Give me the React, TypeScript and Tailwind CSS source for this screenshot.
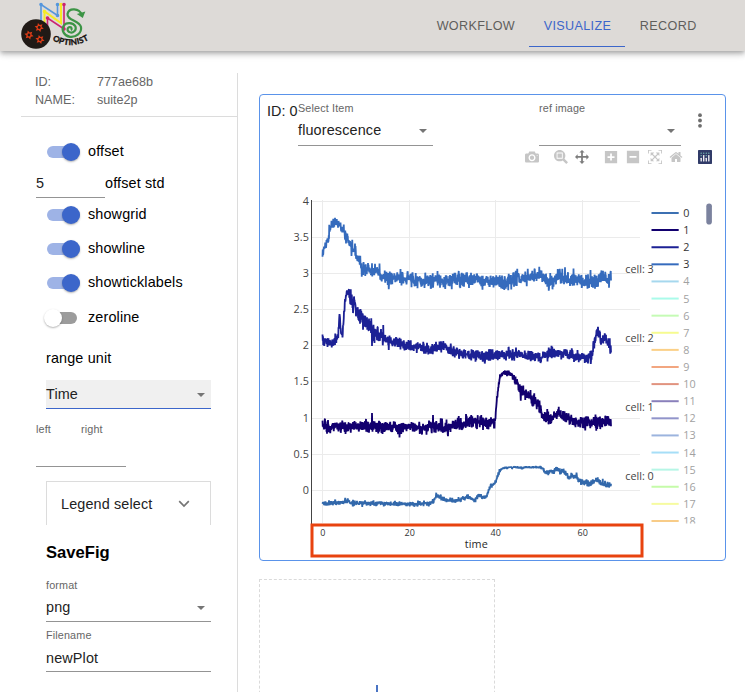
import React from "react";

type Pt = [number, number];

const seeded = (seed: number) => () => {
  seed = (seed * 1664525 + 1013904223) % 4294967296;
  return seed / 4294967296;
};

// Interpolates the key points and adds noise, four samples per pixel.
function trace(points: Pt[], noise: (x: number) => number, seed: number, spikes: Pt[] = []) {
  const rnd = seeded(seed);
  const out: string[] = [];
  let k = 0;
  let drift = 0;
  for (let x = 322.5; x <= 611; x += 0.25) {
    while (k < points.length - 2 && x > points[k + 1][0]) k++;
    const [x0, y0] = points[k];
    const [x1, y1] = points[k + 1];
    const t = Math.max(0, Math.min(1, (x - x0) / (x1 - x0)));
    const n = (rnd() + rnd() + rnd() + rnd() - 2) * 1.95;
    drift = drift * 0.9 + (rnd() - 0.5) * 0.5;
    let y = y0 + (y1 - y0) * t + (n + drift * 0.6) * noise(x);
    for (const [sx, sy] of spikes) if (Math.abs(sx - x) < 0.13) y = sy;
    out.push(`${x.toFixed(2)} ${y.toFixed(2)}`);
  }
  return "M" + out.join("L");
}

const TRACES = [
  {
    color: "#3268ab",
    d: trace(
      [[322, 504], [328, 504], [335, 502], [341, 502.5], [348, 501], [353, 503.5], [372, 503], [400, 504], [430, 503.5], [433, 502], [436, 496.5], [440, 497], [445, 500.5], [455, 501], [462, 499], [468, 496], [471, 498], [475, 501], [478, 495.5], [481, 497], [486, 497.5], [490, 487], [496, 481], [499, 472], [502, 468.5], [510, 467.5], [540, 467.2], [545, 472], [553, 472], [557, 468], [560, 472], [565, 471], [568, 477], [575, 476], [584, 483], [592, 483], [598, 480], [604, 484], [611, 485]],
      (x) => (x > 500 && x < 541 ? 0.55 : x > 560 ? 1.5 : 1.15), 17),
  },
  {
    color: "#12006f",
    d: trace(
      [[322, 427], [330, 426.5], [400, 427], [450, 427], [460, 423.5], [470, 421.5], [495, 422], [497, 397], [500, 377], [504, 371.5], [510, 374], [516, 379], [521, 391], [530, 396], [538, 405], [543, 417], [555, 418], [558, 413], [565, 419], [585, 422], [611, 421]],
      (x) => (x > 495 && x < 514 ? 1.2 : x > 514 && x < 540 ? 3.1 : 2.9), 43,
      [[372, 413], [433, 415], [563, 411]]),
  },
  {
    color: "#1c2195",
    d: trace(
      [[322, 340], [330, 345], [335, 342], [338, 337], [339.5, 315], [341, 331], [342.5, 335], [344, 312], [345.5, 298], [347, 292], [352, 301], [360, 316], [368, 325], [375, 334], [385, 338], [400, 344], [415, 347], [430, 350], [442, 345], [455, 352], [475, 356], [505, 355], [520, 354.5], [540, 357], [557, 352], [575, 356], [590, 358], [592, 355], [594, 342], [598, 328], [601, 343], [605, 338], [611, 347]],
      (x) => (x > 336 && x < 348 ? 2 : x > 348 && x < 390 ? 3.9 : 2.7), 91,
      [[372, 346]]),
  },
  {
    color: "#356bbd",
    d: trace(
      [[322, 255], [327, 241], [331, 227], [335, 221], [339, 225], [345, 234], [351, 246], [358, 260], [363, 268], [370, 272], [377, 272], [386, 279], [400, 277.5], [420, 281], [450, 280.5], [475, 277.5], [485, 281], [505, 281.5], [520, 278.5], [536, 274], [550, 281], [560, 276], [575, 279], [588, 283], [600, 278], [611, 278]],
      (x) => (x < 350 ? 2.6 : 3.4), 7),
  },
];

const Y_TICKS: [string, number][] = [["4", 201.5], ["3.5", 237.5], ["3", 273.5], ["2.5", 309.5], ["2", 345.5], ["1.5", 381.5], ["1", 418.5], ["0.5", 454.5], ["0", 490.5]];
const X_TICKS: [string, number][] = [["0", 322.5], ["20", 409.5], ["40", 495.5], ["60", 582.5]];
const LEGEND = ["#3c70b2", "#12006f", "#1c2195", "#356bbd", "#a6d8ee", "#aafbea", "#c5fbb5", "#f6fb90", "#fbd087", "#f2a680", "#e1937f", "#8a80bb", "#9194ca", "#9cb4de", "#a6def7", "#b6f6e6", "#c5fba9", "#f6fba0", "#f8cc88"];

const Chart = () => (
  <svg className="block" width="465" height="395" viewBox="260 165 465 395" fontFamily="'Open Sans', 'Noto Sans', sans-serif">
    <g stroke="#ebebeb">
      {Y_TICKS.map(([l, y]) => <path key={l} d={`M312 ${y}H640`} />)}
      {X_TICKS.map(([l, x]) => <path key={l} d={`M${x} 200V523`} />)}
    </g>
    <path d="M311.5 200V524" stroke="#444" />
    {TRACES.map((t) => <path key={t.color} d={t.d} fill="none" stroke={t.color} strokeWidth="1.8" strokeLinejoin="bevel" />)}
    <g fontSize="10.8" fill="#444">
      {Y_TICKS.map(([l, y]) => <text key={l} x="309" y={y + 3.7} textAnchor="end">{l}</text>)}
      {[3, 2, 1, 0].map((c, i) => <text key={c} x="625.3" y={273 + i * 69} textLength="28.5">{`cell: ${c}`}</text>)}
    </g>
    <clipPath id="legend"><path d="M645 200H720V523.5H645z" /></clipPath>
    <g clipPath="url(#legend)" fontSize="10.8">
      {LEGEND.map((c, i) => (
        <g key={i}>
          <path d={`M651.5 ${213 + i * 17.11}H678.7`} stroke={c} strokeWidth="2" />
          <text x="683.2" y={217 + i * 17.11} fill={i < 4 ? "#333" : "#a1a1a1"}>{i}</text>
        </g>
      ))}
    </g>
    <rect x="706.3" y="203.5" width="5.6" height="21" rx="2.8" fill="#7b829e" />
    <g fontSize="9" fill="#333" textAnchor="middle">
      {X_TICKS.map(([l, x]) => <text key={l} x={x + 0.3} y="536">{l}</text>)}
      <text x="476.3" y="548" fontSize="10.8" fill="#2a2a2a">time</text>
    </g>
    <rect x="312" y="525" width="330" height="31" fill="none" stroke="#e8430f" strokeWidth="3" />
  </svg>
);

const PATHS = {
  camera: "m500 450c-83 0-150-67-150-150 0-83 67-150 150-150 83 0 150 67 150 150 0 83-67 150-150 150z m400 150h-120c-16 0-34 13-39 29l-31 93c-6 15-23 28-40 28h-340c-16 0-34-13-39-28l-31-94c-6-15-23-28-40-28h-120c-55 0-100-45-100-100v-450c0-55 45-100 100-100h800c55 0 100 45 100 100v450c0 55-45 100-100 100z m-400-550c-138 0-250 112-250 250 0 138 112 250 250 250 138 0 250-112 250-250 0-138-112-250-250-250z m365 380c-19 0-35 16-35 35 0 19 16 35 35 35 19 0 35-16 35-35 0-19-16-35-35-35z",
  zoom: "m1000-25l-250 251c40 63 63 138 63 218 0 224-182 406-407 406-224 0-406-182-406-406s183-406 407-406c80 0 155 22 218 62l250-250 125 125z m-812 250l0 438 437 0 0-438-437 0z m62 375l313 0 0-312-313 0 0 312z",
  pan: "m1000 350l-187 188 0-125-250 0 0 250 125 0-188 187-187-187 125 0 0-250-250 0 0 125-188-188 186-187 0 125 252 0 0-250-125 0 187-188 188 188-125 0 0 250 250 0 0-126 187 188z",
  plus: "m1 787l0-875 875 0 0 875-875 0z m687-500l-187 0 0-187-125 0 0 187-188 0 0 125 188 0 0 187 125 0 0-187 187 0 0-125z",
  minus: "m0 788l0-876 875 0 0 876-875 0z m688-500l-500 0 0 125 500 0 0-125z",
  auto: "m250 850l-187 0-63 0 0-62 0-188 63 0 0 188 187 0 0 62z m688 0l-188 0 0-62 188 0 0-188 62 0 0 188 0 62-62 0z m-875-938l0 188-63 0 0-188 0-62 63 0 187 0 0 62-187 0z m875 188l0-188-188 0 0-62 188 0 62 0 0 62 0 188-62 0z m-125 188l-1 0-93-94-156 156 156 156 92-93 2 0 0 250-250 0 0-2 93-92-156-156-156 156 94 92 0 2-250 0 0-250 0 0 93 93 157-156-157-156-93 94 0 0 0-250 250 0 0 0-94 93 156 157 156-157-93-93 0 0 250 0 0 250z",
  home: "m786 296v-267q0-15-11-26t-25-10h-214v214h-143v-214h-214q-15 0-25 10t-11 26v267q0 1 0 2t0 2l321 264 321-264q1-1 1-4z m124 39l-34-41q-5-5-12-6h-2q-7 0-12 3l-386 322-386-322q-7-4-13-4-7 2-12 7l-35 41q-4 5-3 13t6 12l401 334q18 15 42 15t43-15l136-114v109q0 8 5 13t13 5h107q8 0 13-5t5-13v-227l122-102q5-5 6-12t-4-13z",
};

const ModeIcon = ({ name, w = 1000, active = false }: { name: keyof typeof PATHS; w?: number; active?: boolean }) => (
  <svg width="14" height="14" viewBox={`0 0 ${w} 1000`} className={active ? "text-[#7c7c7c]" : "text-[#c6c6c6]"}>
    <path d={PATHS[name]} transform="matrix(1 0 0 -1 0 850)" fill="currentColor" />
  </svg>
);

const ModeBar = () => (
  <div className="flex h-[18px] items-center justify-end gap-[15px] pr-[13px]">
    <ModeIcon name="camera" />
    <div className="flex gap-[7px]"><ModeIcon name="zoom" /><ModeIcon name="pan" active /></div>
    <div className="flex gap-[8px]">
      <ModeIcon name="plus" w={875} /><ModeIcon name="minus" w={875} /><ModeIcon name="auto" /><span className="-ml-[1px]"><ModeIcon name="home" w={928.6} /></span>
    </div>
    <svg width="14" height="14" viewBox="0 0 132 132">
      <rect width="132" height="132" rx="6" fill="#313b68" />
      <g fill="#80cfbe"><circle cx="78" cy="54" r="6" /><circle cx="102" cy="30" r="6" /><circle cx="78" cy="30" r="6" /><circle cx="54" cy="30" r="6" /><circle cx="30" cy="30" r="6" /><circle cx="30" cy="54" r="6" /></g>
      <g fill="#fff"><rect x="24" y="72" width="12" height="36" rx="5" /><rect x="48" y="48" width="12" height="60" rx="5" /><rect x="72" y="72" width="12" height="36" rx="5" /><rect x="96" y="48" width="12" height="60" rx="5" /></g>
    </svg>
  </div>
);

const star = (cx: number, cy: number) =>
  Array.from({ length: 12 }, (_, i) => {
    const r = i % 2 ? 2.5 : 4.7;
    const a = (i * Math.PI) / 6 + 0.25;
    return `${cx + r * Math.cos(a)},${cy + r * Math.sin(a)}`;
  }).join(" ");

const Logo = () => (
  <svg width="74" height="51" viewBox="19 0 74 51">
    <g fill="none" strokeWidth="1.6">
      <g stroke="#5596dd"><path d="M41 24V4.5L57.5 15.5V4.5" /><circle cx="41" cy="4.5" r="1" fill="#5596dd" /><circle cx="57.5" cy="4.5" r="1" fill="#5596dd" /><circle cx="57.5" cy="15.5" r="1" fill="#5596dd" /></g>
      <g stroke="#f5ea25" strokeWidth="2"><path d="M44.5 24V11.5L61 23V4.5" /><circle cx="44.5" cy="11.5" r=".8" /><circle cx="61" cy="4.5" r=".8" /></g>
      <g stroke="#cb2372"><path d="M47.5 26V18L64 29V4.5" /><circle cx="47.5" cy="18" r="1" fill="#cb2372" /><circle cx="64" cy="4.5" r="1" fill="#cb2372" /><circle cx="64" cy="29" r="1" fill="#cb2372" /></g>
      <path d="M82 15C79 8 69 7.5 67.5 14C66.7 20.5 79.5 20 81 27C82 33 76 37.5 70 36.8C64 36 61.2 30 63.5 26C66 22 73 22.3 75.5 26.5C76.7 30.5 73 33.3 70 32.3C66.5 31.3 67 27 70 27.2C72 27.3 72 29.5 70.8 30" stroke="#3c9445" strokeWidth="2.2" />
    </g>
    <path d="M76.8 14L85.3 11.5L82.8 18Z" fill="#3c9445" />
    <circle cx="36" cy="34" r="14.8" fill="#201a16" />
    <g fill="#dc3b16">{[[39.2, 27.5], [29, 35], [40, 39.5]].map(([x, y]) => <polygon key={x} points={star(x, y)} />)}</g>
    <g fill="#201a16">{[[39.2, 27.5], [29, 35], [40, 39.5]].map(([x, y]) => <circle key={x} cx={x} cy={y} r="1.4" />)}</g>
    <path id="arc" d="M52.2 40Q71 50.5 90 39.2" fill="none" />
    <text fontFamily="Lato, sans-serif" fontWeight="900" fontSize="8.2" fill="#171310" stroke="#171310" strokeWidth=".25">
      <textPath href="#arc" textLength="38.5">OPTINIST</textPath>
    </text>
  </svg>
);

const Caret = () => <span className="border-x-[4.5px] border-t-[4.5px] border-x-transparent border-t-[#757575]" />;

const Toggle = ({ label, on = true, h = "h-[34px]" }: { label: string; on?: boolean; h?: string }) => (
  <div className={`flex items-center pl-[23px] ${h}`}>
    <span className={`flex h-[18px] w-9 shrink-0 items-center ${on ? "justify-end" : "justify-start"}`}>
      <span className={`flex h-3 items-center rounded-full ${on ? "ml-[3px] w-[33px] justify-end bg-[#9eb3e6]" : "ml-[3px] w-[30px] justify-start bg-[#9c9c9c]"}`}>
        <span className={`size-[18px] shrink-0 rounded-full shadow-[0_1px_2px_rgba(0,0,0,0.3)] ${on ? "bg-[#3c66ca]" : "-ml-[3px] bg-white"}`} />
      </span>
    </span>
    <span className="pl-[8px]">{label}</span>
  </div>
);

const Sidebar = () => (
  <aside className="ml-[21px] mt-[22px] flex w-[217px] shrink-0 flex-col border-r border-[#dcdcdc] tracking-[0.14px] text-black">
    <div className="grid h-[44px] grid-cols-[62px_1fr] content-start border-b border-[#dcdcdc] pl-[14px] text-[12.6px] leading-[18px] tracking-normal text-[#666]">
      <span>ID:</span><span>777ae68b</span>
      <span>NAME:</span><span>suite2p</span>
    </div>
    <div className="flex flex-col pt-[18px]">
      <Toggle label="offset" />
      <div className="flex h-[29px] items-stretch pl-[15px] leading-[29px]">
        <span className="w-[69px] border-b border-[#949494] text-[#222]">5</span><span>offset std</span>
      </div>
      <Toggle label="showgrid" />
      <Toggle label="showline" />
      <Toggle label="showticklabels" />
      <Toggle label="zeroline" on={false} h="h-[35px]" />
      <div className="h-[45px] pl-[25px] leading-[46px]">range unit</div>
      <div className="ml-[25px] flex h-[29px] w-[165px] items-center justify-between border-b border-[#3c66ca] bg-[#f0f0f0] pr-[6px] pt-[2px] text-[#222]"><span>Time</span><Caret /></div>
      <div className="ml-[15px] mt-[12px] flex h-[46px] w-[90px] border-b border-[#949494] text-[10.8px] leading-4 text-[#666]">
        <span className="w-[45px]">left</span><span>right</span>
      </div>
      <div className="ml-[25px] mt-[14px] flex h-[44px] w-[165px] items-center justify-between border border-b-0 border-[#dcdcdc] pl-[14px] pr-[20px] pt-[3px] text-[#222]">
        <span>Legend select</span>
        <svg className="mb-[2px]" width="12" height="8" viewBox="0 0 12 8" fill="none" stroke="#757575" strokeWidth="1.7"><path d="M1.2 1.2L6 6L10.8 1.2" /></svg>
      </div>
      <div className="h-[53px] pl-[25px] text-[16.6px] font-bold leading-[56px] tracking-normal">SaveFig</div>
      <div className="ml-[25px] w-[165px] text-[#222]">
        <div className="h-[14px] text-[10.8px] leading-[14px] text-[#666]">format</div>
        <div className="flex h-[30px] items-center justify-between border-b border-[#949494] pr-[6px] pt-[3px]"><span>png</span><Caret /></div>
        <div className="mt-[6px] h-[15px] text-[10.8px] leading-[14px] text-[#666]">Filename</div>
        <div className="h-[29px] border-b border-[#949494] leading-[30px]">newPlot</div>
      </div>
    </div>
    <div className="flex-1" />
  </aside>
);

const Field = ({ label, value, w }: { label: string; value: string; w: string }) => (
  <div className={`flex h-[45px] flex-col border-b border-[#949494] ${w}`}>
    <span className="h-[14px] whitespace-nowrap text-[10.8px] leading-[14px] text-[#666]">{label}</span>
    <div className="flex flex-1 items-center justify-between pr-[6.5px] pt-[2px]"><span>{value}</span><Caret /></div>
  </div>
);

const TABS = ["WORKFLOW", "VISUALIZE", "RECORD"];

export default function App() {
  return (
    <div className="flex h-[692px] w-[745px] flex-col overflow-hidden bg-white font-['Liberation_Sans',Arial,sans-serif] text-[14.4px]">
      <header className="z-10 flex h-[51px] shrink-0 justify-between bg-[#dddad7] pl-[19px] pr-[34px] shadow-[0_2px_4px_-1px_rgba(0,0,0,0.2),0_4px_5px_0_rgba(0,0,0,0.14),0_1px_10px_0_rgba(0,0,0,0.12)]">
        <Logo />
        <nav className="flex h-[47px] text-[12.6px] leading-[52px] tracking-[0.36px] text-[#5f5e5c]">
          {TABS.map((t) => (
            <span key={t} className={t === "VISUALIZE" ? "border-b border-[#3c66ca] px-[14.2px] text-[#3c66ca]" : "px-[14.4px]"}>{t}</span>
          ))}
        </nav>
      </header>
      <div className="flex min-h-0 flex-1">
        <Sidebar />
        <main className="ml-[21px] mt-[43px] flex flex-col">
          <section className="h-[467px] w-[467px] shrink-0 rounded-[4px] border border-[#5a93ea] tracking-[0.14px] text-[#222]">
            <div className="flex h-[53px] pl-[7px] pt-[6px]">
              <span className="w-[31px] shrink-0 whitespace-nowrap leading-[21px] tracking-normal">ID: 0</span>
              <Field label="Select Item" value="fluorescence" w="w-[135px]" />
              <div className="w-[106px]" />
              <Field label="ref image" value="" w="w-[142px]" />
              <svg className="ml-[16px] mt-[12px]" width="6" height="15" viewBox="0 0 6 15" fill="#6e6e6e"><circle cx="3" cy="2.2" r="1.9" /><circle cx="3" cy="7.5" r="1.9" /><circle cx="3" cy="12.8" r="1.9" /></svg>
            </div>
            <ModeBar />
            <div className="-mt-[1px]"><Chart /></div>
          </section>
          <section className="mt-[18px] flex h-[130px] w-[236px] shrink-0 justify-center border border-dashed border-[#dadada] pt-[105px]">
            <span className="h-6 w-[2px] bg-[#4a74c4]" />
          </section>
        </main>
      </div>
    </div>
  );
}
